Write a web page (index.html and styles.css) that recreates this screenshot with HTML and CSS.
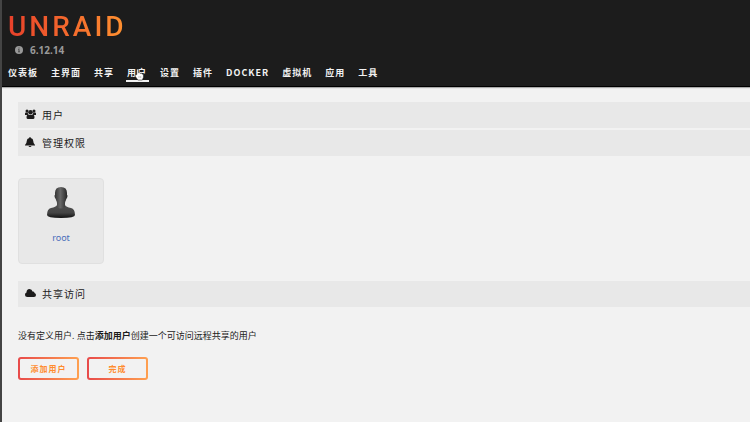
FILE: index.html
```
<!DOCTYPE html>
<html lang="zh-CN">
<head>
    <meta charset="UTF-8">
    <meta name="viewport" content="width=device-width, initial-scale=1.0">
    <title>用户</title>
    <link rel="stylesheet" href="styles.css">
</head>
<body>
    <header class="header">
        <div class="logo">UNRAID</div>
        <div class="version">
            <svg class="info-icon" viewBox="0 0 16 16"><circle cx="8" cy="8" r="8" fill="#999"/><path d="M7 3h2v2H7zM6 6.500h3V11h1v1.500H6V11h1V8H6z" fill="#444"/></svg>
            <span>6.12.14</span>
        </div>
        <nav class="menu">
            <a href="#">仪表板</a>
            <a href="#">主界面</a>
            <a href="#">共享</a>
            <a href="#" class="active">用户
                <svg class="cursor" viewBox="0 0 18 22"><path d="M5 11V3q0-2 1.500-2T8 3v5q3-1 4 1 2-1 3 1 2 0 2 2v4l-2 5H7l-5-7q-1-2 1-2z" fill="#fff" stroke="#222" stroke-width="1"/><path d="M9 14v3M12 14v3" stroke="#888" stroke-width="1"/></svg>
            </a>
            <a href="#">设置</a>
            <a href="#">插件</a>
            <a href="#">DOCKER</a>
            <a href="#">虚拟机</a>
            <a href="#">应用</a>
            <a href="#">工具</a>
        </nav>
    </header>

    <main class="content">
        <h2 class="title">
            <svg class="title-icon" viewBox="0 0 22 20"><circle cx="4" cy="4" r="3"/><circle cx="18" cy="4" r="3"/><path d="M0 12V9q0-2 2-2h4q-1 3 1 5zM22 12V9q0-2-2-2h-4q1 3-1 5z"/><circle cx="11" cy="6.500" r="4.500"/><path d="M3 17q0-6 4-6 4 2 8 0 4 0 4 6 0 3-3 3H6q-3 0-3-3z"/></svg>
            用户
        </h2>
        <h2 class="title">
            <svg class="title-icon" viewBox="0 0 22 20"><path d="M10 0q1.500 0 1.500 2 5 1 5 6 0 5 3.500 8v1H0v-1q3.500-3 3.500-8 0-5 5-6 0-2 1.500-2zM7 18h6q-.5 2-3 2t-3-2z"/></svg>
            管理权限
        </h2>

        <div class="user-list">
            <a href="#" class="user-card">
                <svg class="avatar" viewBox="0 0 28 32">
                    <defs>
                        <linearGradient id="skin" x1="0" x2="1" y1="0" y2="0">
                            <stop offset="0" stop-color="#303030"/>
                            <stop offset=".45" stop-color="#686868"/>
                            <stop offset="1" stop-color="#242424"/>
                        </linearGradient>
                        <linearGradient id="torso" x1="0" x2="0" y1="0" y2="1">
                            <stop offset="0" stop-color="#505050"/>
                            <stop offset=".6" stop-color="#444"/>
                            <stop offset="1" stop-color="#111"/>
                        </linearGradient>
                    </defs>
                    <path d="M0 28q0-6 4-7 5-1 6-3h8q1 2 6 3 4 1 4 7 0 3-14 3T0 28z" fill="url(#torso)"/>
                    <path d="M14 0q6 0 6 6v2q1 0 0 3-1 1-1 2-1 2-1 3v4q-4 3-8 0v-4q0-1-1-3 0-1-1-2-1-3 0-3V6q0-6 6-6z" fill="url(#skin)"/>
                </svg>
                <span>root</span>
            </a>
        </div>

        <h2 class="title">
            <svg class="title-icon" viewBox="0 0 22 20"><path d="M5 18q-5 0-5-5 0-3 3-4 0-7 6-7 5 0 6 5 4-1 4 3 3 1 3 4 0 4-4 4z"/></svg>
            共享访问
        </h2>

        <p class="notice">没有定义用户. 点击<b>添加用户</b>创建一个可访问远程共享的用户</p>

        <div class="buttons">
            <button type="button">添加用户</button>
            <button type="button">完成</button>
        </div>
    </main>
</body>
</html>
```

FILE: styles.css
```
* {
    box-sizing: border-box;
}

body {
    margin: 0;
    min-height: 100vh;
    border-left: 2px solid #444;
    background: #f2f2f2;
    color: #1c1b1b;
    font-family: "Noto Sans", "Noto Sans CJK SC", sans-serif;
    font-size: 9px;
}

a {
    text-decoration: none;
}

/* Header */
.header {
    height: 87px;
    padding: 10px 6px 0;
    background: #1c1c1c;
    border-bottom: 1px solid #000;
    box-shadow: 0 1px 1px #aaa;
}

.logo {
    width: max-content;
    padding-top: 1px;
    font-family: Roboto, sans-serif;
    font-size: 28px;
    line-height: 31px;
    font-weight: 500;
    letter-spacing: 3px;
    background: linear-gradient(90deg, #e8402a, #ff9230);
    -webkit-background-clip: text;
    background-clip: text;
    color: transparent;
}

.version {
    display: flex;
    align-items: center;
    gap: 7px;
    padding-left: 7px;
    height: 15px;
    color: #999;
    font-family: "Open Sans", sans-serif;
    font-size: 10px;
    font-weight: bold;
}

.info-icon {
    width: 8px;
    height: 8px;
}

.menu {
    display: flex;
    gap: 13px;
    margin-top: 7px;
}

.menu a {
    position: relative;
    height: 18px;
    line-height: 18px;
    color: #f2f2f2;
    font-family: "Noto Sans CJK SC", sans-serif;
    font-weight: bold;
    letter-spacing: 1px;
    white-space: nowrap;
}

.menu .active::after {
    content: "";
    position: absolute;
    left: -1px;
    right: -2px;
    bottom: 0;
    height: 2px;
    background: #f2f2f2;
}

.cursor {
    position: absolute;
    left: 7px;
    top: 4px;
    width: 10px;
    height: 13px;
    z-index: 1;
}

/* Content */
.content {
    padding: 15px 0 0 16px;
}

.title {
    display: flex;
    align-items: center;
    gap: 6px;
    height: 26px;
    margin: 0 0 2px;
    padding: 0 0 2px 7px;
    background: #e8e8e8;
    font-size: 10px;
    font-weight: normal;
    letter-spacing: 1px;
}

.title-icon {
    width: 11px;
    height: 10px;
    fill: #1c1b1b;
}

.user-list {
    display: flex;
    padding: 20px 0 17px;
}

.user-card {
    display: flex;
    flex-direction: column;
    align-items: center;
    gap: 12px;
    width: 86px;
    height: 86px;
    padding-top: 8px;
    border: 1px solid #e0e0e0;
    border-radius: 4px;
    background: #e8e8e8;
    color: #486dba;
}

.avatar {
    width: 28px;
    height: 32px;
}

.notice {
    margin: 22px 0 14px;
    line-height: 14px;
}

.buttons {
    display: flex;
    gap: 8px;
}

.buttons button {
    width: 61px;
    height: 23px;
    padding: 0;
    border: 2px solid transparent;
    border-radius: 3px;
    background: linear-gradient(#f2f2f2, #f2f2f2) padding-box, linear-gradient(90deg, #e84a4a, #ffa050) border-box;
    color: #ff8c2f;
    font-family: inherit;
    font-size: 8px;
    font-weight: bold;
    letter-spacing: 1px;
}
```
